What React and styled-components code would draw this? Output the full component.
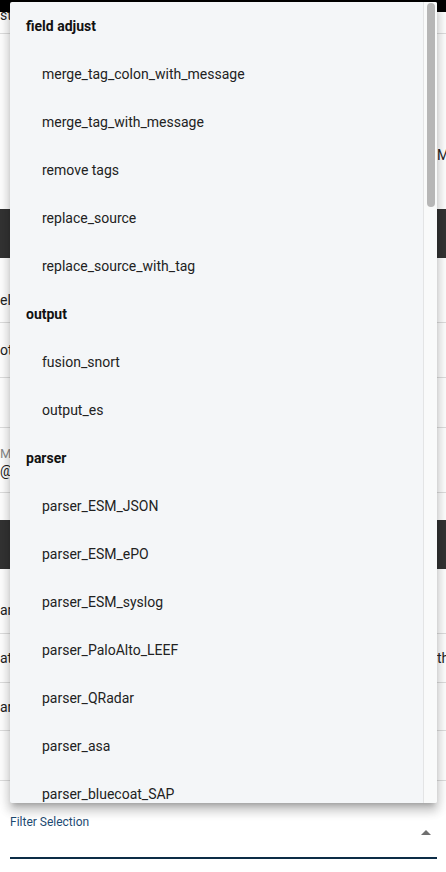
import React from 'react';
import styled, { createGlobalStyle } from 'styled-components';

const groups = [
  {
    title: 'field adjust',
    items: [
      'merge_tag_colon_with_message',
      'merge_tag_with_message',
      'remove tags',
      'replace_source',
      'replace_source_with_tag',
    ],
  },
  { title: 'output', items: ['fusion_snort', 'output_es'] },
  {
    title: 'parser',
    items: [
      'parser_ESM_JSON',
      'parser_ESM_ePO',
      'parser_ESM_syslog',
      'parser_PaloAlto_LEEF',
      'parser_QRadar',
      'parser_asa',
      'parser_bluecoat_SAP',
      'parser_bluecoat_proxy',
      'parser_checkpoint',
    ],
  },
];

const GlobalStyle = createGlobalStyle`
  html, body {
    margin: 0;
    padding: 0;
    background: #fff;
  }
  body {
    font-family: Roboto, 'Liberation Sans', sans-serif;
    color: #222;
  }
`;

const App = () => (
  <>
    <GlobalStyle />
    <Page>
      <TopBar />
      <Row h={22} line clip>
        <Cell shift={-5}>status</Cell>
        <Cell />
      </Row>
      <Row h={175} end={46}>
        <Cell />
        <Cell>Manager</Cell>
      </Row>
      <DarkBar />
      <Row h={65} line end={14}>
        <Cell>elements</Cell>
        <Cell />
      </Row>
      <Row h={55} line>
        <Cell>otal</Cell>
        <Cell />
      </Row>
      <Row h={50} line />
      <Row h={65} line>
        <InputCell>
          <small>Mail</small>
          <span>@sample.com</span>
        </InputCell>
        <Cell />
      </Row>
      <Row h={27} />
      <DarkBar />
      <Row h={65} line end={15}>
        <Cell>and</Cell>
        <Cell />
      </Row>
      <Row h={49} line>
        <Cell>attributes</Cell>
        <Cell>the</Cell>
      </Row>
      <Row h={48} line>
        <Cell>archive</Cell>
        <Cell />
      </Row>
      <Row h={50} line />
      <SelectField>
        <Label>Filter Selection</Label>
        <ValueArea>
          <Arrow viewBox="0 0 10 5">
            <path d="M0 5 L5 0 L10 5 Z" />
          </Arrow>
        </ValueArea>
      </SelectField>

      <Menu>
        <List>
          {groups.map(g => (
            <React.Fragment key={g.title}>
              <MenuRow header>{g.title}</MenuRow>
              {g.items.map(i => (
                <MenuRow key={i}>{i}</MenuRow>
              ))}
            </React.Fragment>
          ))}
        </List>
        <Track>
          <Thumb />
        </Track>
      </Menu>
    </Page>
  </>
);

const Page = styled.div`
  position: relative;
  width: 100%;
  height: 872px;
  overflow: hidden;
  font-size: 14px;
`;

const TopBar = styled.div`
  height: 12px;
  background: #000;
`;

const DarkBar = styled.div`
  height: 49px;
  background: #333;
`;

const Row = styled.div`
  display: grid;
  grid-template-columns: 437px 1fr;
  align-items: ${p => (p.end != null ? 'end' : p.clip ? 'start' : 'center')};
  height: ${p => p.h}px;
  padding-bottom: ${p => p.end || 0}px;
  box-sizing: border-box;
  border-bottom: ${p => (p.line ? '1px solid #dedede' : 'none')};
  overflow: ${p => (p.clip ? 'hidden' : 'visible')};
  white-space: nowrap;
`;

const Cell = styled.div`
  line-height: 16px;
  margin-top: ${p => p.shift || 0}px;
  overflow: hidden;
`;

const InputCell = styled.div`
  display: flex;
  flex-direction: column;
  align-self: stretch;
  justify-content: flex-start;
  padding-top: 18px;
  small {
    font-size: 13px;
    color: #8a8a8a;
    line-height: 16px;
  }
  span {
    line-height: 18px;
  }
`;

const SelectField = styled.div`
  margin: 0 9px 0 10px;
  padding-top: 34px;
`;

const Label = styled.div`
  font-size: 12px;
  line-height: 14px;
  color: #1d4a72;
`;

const ValueArea = styled.div`
  display: flex;
  justify-content: flex-end;
  align-items: flex-start;
  height: 30px;
  box-sizing: border-box;
  padding: 0 6px 0 0;
  border-bottom: 2px solid #0c2c46;
`;

const Arrow = styled.svg`
  width: 10px;
  height: 5px;
  margin-top: 1px;
  fill: #6f6f6f;
`;

const Menu = styled.div`
  position: absolute;
  top: 2px;
  left: 10px;
  width: 427px;
  height: 801px;
  display: flex;
  overflow: hidden;
  background: #f4f6f8;
  border-radius: 2px;
  box-shadow: 0 5px 5px -3px rgba(0, 0, 0, 0.2), 0 8px 10px 1px rgba(0, 0, 0, 0.14),
    0 3px 14px 2px rgba(0, 0, 0, 0.12);
`;

const List = styled.div`
  flex: 1;
  overflow: hidden;
`;

const Track = styled.div`
  flex: 0 0 14px;
  box-sizing: border-box;
  padding: 1px 2px 0 3px;
  background: #f9fafa;
  border-left: 1px solid #e3e4e5;
`;

const Thumb = styled.div`
  height: 204px;
  border-radius: 4px;
  background: #b6b6b6;
`;

const MenuRow = styled.div`
  display: flex;
  align-items: center;
  height: 48px;
  padding-left: ${p => (p.header ? 16 : 32)}px;
  font-size: 14px;
  font-weight: ${p => (p.header ? 700 : 400)};
  color: ${p => (p.header ? '#111' : '#222')};
  white-space: nowrap;
`;

export default App;
